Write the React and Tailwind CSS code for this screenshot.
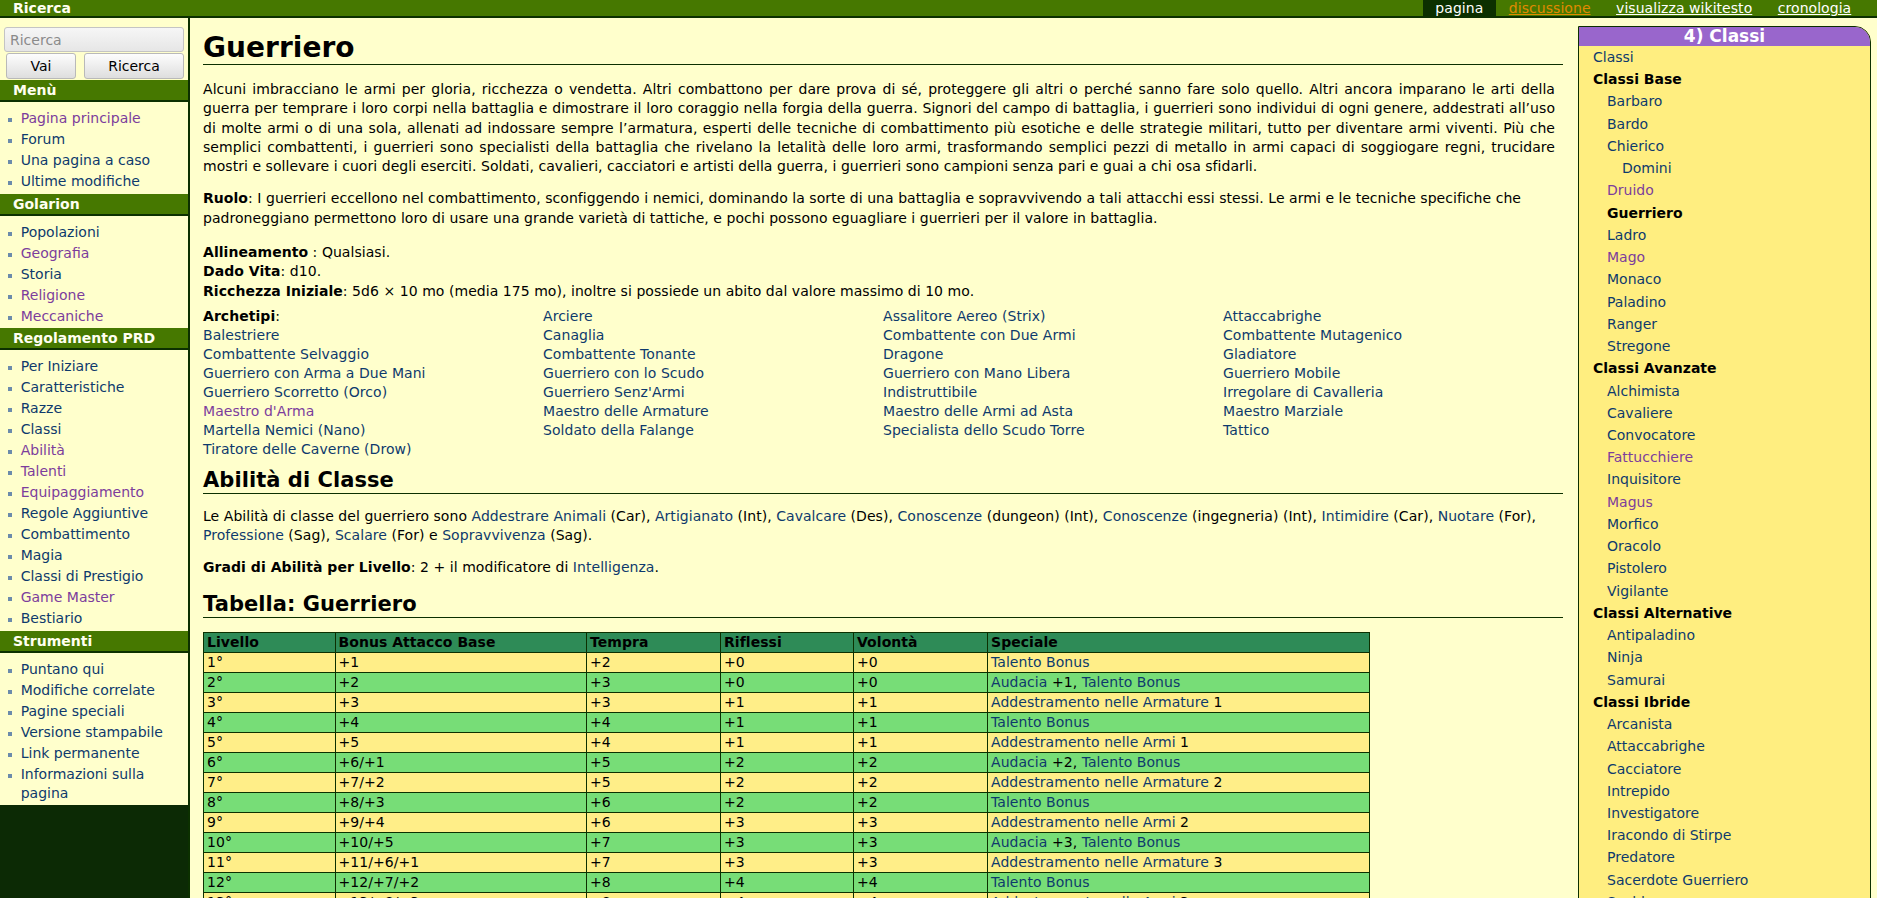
import React from 'react';

// pagina wiki "Guerriero" - layout stile MediaWiki con sidebar e box classi
const LINK = 'text-[#0e3a6c]';
const VISITED = 'text-[#7c3d9c]';

function Wiki({ text }) {
  // [Testo] = link, [*Testo] = link visitato
  return text.split(/(\[[^\]]+\])/).map((part, i) => {
    if (part.startsWith('[')) {
      const inner = part.slice(1, -1);
      const visited = inner.startsWith('*');
      return (
        <a key={i} href="#" className={visited ? VISITED : LINK}>
          {visited ? inner.slice(1) : inner}
        </a>
      );
    }
    return <span key={i}>{part}</span>;
  });
}

const sidebar = [
  { title: 'Menù', items: ['*Pagina principale', 'Forum', 'Una pagina a caso', 'Ultime modifiche'] },
  { title: 'Golarion', items: ['Popolazioni', '*Geografia', 'Storia', '*Religione', '*Meccaniche'] },
  {
    title: 'Regolamento PRD',
    items: [
      'Per Iniziare', 'Caratteristiche', 'Razze', 'Classi', '*Abilità', '*Talenti', '*Equipaggiamento',
      'Regole Aggiuntive', 'Combattimento', 'Magia', 'Classi di Prestigio', '*Game Master', 'Bestiario'
    ]
  },
  {
    title: 'Strumenti',
    items: ['Puntano qui', 'Modifiche correlate', 'Pagine speciali', 'Versione stampabile', 'Link permanente', 'Informazioni sulla pagina']
  }
];

const tabs = [
  { label: 'pagina', active: true },
  { label: 'discussione', missing: true },
  { label: 'visualizza wikitesto' },
  { label: 'cronologia' }
];

// [testo, livello, tipo]
const classi = [
  ['Classi', 0], ['Classi Base', 0, 'b'],
  ['Barbaro', 1], ['Bardo', 1], ['Chierico', 1], ['Domini', 2], ['Druido', 1, 'v'], ['Guerriero', 1, 'b'],
  ['Ladro', 1], ['Mago', 1, 'v'], ['Monaco', 1], ['Paladino', 1], ['Ranger', 1], ['Stregone', 1],
  ['Classi Avanzate', 0, 'b'],
  ['Alchimista', 1], ['Cavaliere', 1], ['Convocatore', 1], ['Fattucchiere', 1, 'v'], ['Inquisitore', 1],
  ['Magus', 1, 'v'], ['Morfico', 1], ['Oracolo', 1], ['Pistolero', 1], ['Vigilante', 1],
  ['Classi Alternative', 0, 'b'],
  ['Antipaladino', 1], ['Ninja', 1], ['Samurai', 1],
  ['Classi Ibride', 0, 'b'],
  ['Arcanista', 1], ['Attaccabrighe', 1], ['Cacciatore', 1], ['Intrepido', 1], ['Investigatore', 1],
  ['Iracondo di Stirpe', 1], ['Predatore', 1], ['Sacerdote Guerriero', 1], ['Scaldo', 1],
  ['Schermagliatore', 1], ['Sciamano', 1], ['Spadaccino', 1]
];

const archetipi = [
  null, 'Arciere', 'Assalitore Aereo (Strix)', 'Attaccabrighe',
  'Balestriere', 'Canaglia', 'Combattente con Due Armi', 'Combattente Mutagenico',
  'Combattente Selvaggio', 'Combattente Tonante', 'Dragone', 'Gladiatore',
  'Guerriero con Arma a Due Mani', 'Guerriero con lo Scudo', 'Guerriero con Mano Libera', 'Guerriero Mobile',
  'Guerriero Scorretto (Orco)', "Guerriero Senz'Armi", 'Indistruttibile', 'Irregolare di Cavalleria',
  "*Maestro d'Arma", 'Maestro delle Armature', 'Maestro delle Armi ad Asta', 'Maestro Marziale',
  'Martella Nemici (Nano)', 'Soldato della Falange', 'Specialista dello Scudo Torre', 'Tattico',
  'Tiratore delle Caverne (Drow)'
];

const livelli = [
  ['1°', '+1', '+2', '+0', '+0', '[Talento Bonus]'],
  ['2°', '+2', '+3', '+0', '+0', '[Audacia] +1, [Talento Bonus]'],
  ['3°', '+3', '+3', '+1', '+1', '[Addestramento nelle Armature] 1'],
  ['4°', '+4', '+4', '+1', '+1', '[Talento Bonus]'],
  ['5°', '+5', '+4', '+1', '+1', '[Addestramento nelle Armi] 1'],
  ['6°', '+6/+1', '+5', '+2', '+2', '[Audacia] +2, [Talento Bonus]'],
  ['7°', '+7/+2', '+5', '+2', '+2', '[Addestramento nelle Armature] 2'],
  ['8°', '+8/+3', '+6', '+2', '+2', '[Talento Bonus]'],
  ['9°', '+9/+4', '+6', '+3', '+3', '[Addestramento nelle Armi] 2'],
  ['10°', '+10/+5', '+7', '+3', '+3', '[Audacia] +3, [Talento Bonus]'],
  ['11°', '+11/+6/+1', '+7', '+3', '+3', '[Addestramento nelle Armature] 3'],
  ['12°', '+12/+7/+2', '+8', '+4', '+4', '[Talento Bonus]'],
  ['13°', '+13/+8/+3', '+8', '+4', '+4', '[Addestramento nelle Armi] 3'],
  ['14°', '+14/+9/+4', '+9', '+4', '+4', '[Audacia] +4, [Talento Bonus]'],
  ['15°', '+15/+10/+5', '+9', '+5', '+5', '[Addestramento nelle Armature] 4'],
  ['16°', '+16/+11/+6/+1', '+10', '+5', '+5', '[Talento Bonus]']
];

function SidebarLink({ label }) {
  const visited = label.startsWith('*');
  return (
    <li className="flex mt-[2px] leading-[19px]">
      <span className="mt-[9px] ml-[8px] mr-[8.7px] h-[4px] w-[4px] shrink-0 bg-[#6b8bab]"></span>
      <a href="#" className={visited ? VISITED : LINK}>{visited ? label.slice(1) : label}</a>
    </li>
  );
}

function Sidebar() {
  return (
    <div className="w-[188px] shrink-0 self-start bg-[#ffffcc]">
      {/* ricerca */}
      <div className="pt-[9px] pb-[1px] pl-[4px] pr-[4px]">
        <input
          placeholder="Ricerca"
          className="block h-[25px] w-[180px] rounded-[3px] border border-[#c4c4c4] bg-gradient-to-b from-[#f6f6f6] to-[#e6e6e6] px-[5px] text-[14px] text-black placeholder:text-[#8a8a8a] outline-none"
        />
        <div className="mt-[1px] flex">
          <button className="ml-[2px] h-[26px] w-[70px] rounded-[3px] border border-[#b9b9b9] bg-gradient-to-b from-[#fdfdfd] to-[#dedede] text-[14px] text-black">
            Vai
          </button>
          <button className="ml-[8px] h-[26px] w-[100px] rounded-[3px] border border-[#b9b9b9] bg-gradient-to-b from-[#fdfdfd] to-[#dedede] text-[14px] text-black">
            Ricerca
          </button>
        </div>
      </div>

      {sidebar.map((section) => (
        <div key={section.title}>
          <div className="h-[22px] border-b-2 border-[#0c3000] bg-[#467800] pl-[13px] text-[14px] font-bold leading-[20px] text-[#fffff0]">
            {section.title}
          </div>
          <ul className="pt-[5px] pb-[2.5px] pr-[6px]">
            {section.items.map((item) => (
              <SidebarLink key={item} label={item} />
            ))}
          </ul>
        </div>
      ))}
    </div>
  );
}

function ClassiBox() {
  return (
    <div className="ml-[15px] w-[293px] shrink-0 self-start overflow-hidden rounded-tr-[16px] border border-[#0c3000] bg-[#ffee80]">
      <div className="bg-[#9966cc] text-center text-[17px] font-bold leading-[19px] text-white">4) Classi</div>
      <ul className="pl-[14px] pb-[6px]">
        {classi.map(([label, level, kind]) => (
          <li
            key={label}
            className={`leading-[22.24px] ${level === 1 ? 'pl-[14px]' : level === 2 ? 'pl-[29px]' : ''}`}
          >
            {kind === 'b' ? (
              <span className="font-bold text-black">{label}</span>
            ) : (
              <a href="#" className={kind === 'v' ? VISITED : LINK}>{label}</a>
            )}
          </li>
        ))}
      </ul>
    </div>
  );
}

function Content() {
  return (
    <div className="flex min-h-[880px] flex-1 border-l-2 border-[#0c3000] bg-[#ffffcc] pt-[8px] pl-[13px] pr-[6px]">
      <div className="min-w-0 flex-1 tracking-[0.05px] text-black">
        <h1 className="mt-[6px] mb-[15px] border-b border-[#0c3000] text-[28px] font-bold leading-[32px]">Guerriero</h1>

        <p className="mb-[13px] pr-[8px] text-justify leading-[19.25px]">
          Alcuni imbracciano le armi per gloria, ricchezza o vendetta. Altri combattono per dare prova di sé, proteggere gli altri o
          perché sanno fare solo quello. Altri ancora imparano le arti della guerra per temprare i loro corpi nella battaglia e
          dimostrare il loro coraggio nella forgia della guerra. Signori del campo di battaglia, i guerrieri sono individui di ogni
          genere, addestrati all’uso di molte armi o di una sola, allenati ad indossare sempre l’armatura, esperti delle tecniche di
          combattimento più esotiche e delle strategie militari, tutto per diventare armi viventi. Più che semplici combattenti, i
          guerrieri sono specialisti della battaglia che rivelano la letalità delle loro armi, trasformando semplici pezzi di metallo
          in armi capaci di soggiogare regni, trucidare mostri e sollevare i cuori degli eserciti. Soldati, cavalieri, cacciatori e
          artisti della guerra, i guerrieri sono campioni senza pari e guai a chi osa sfidarli.
        </p>

        <p className="mb-[15px] leading-[19.25px]">
          <b>Ruolo</b>: I guerrieri eccellono nel combattimento, sconfiggendo i nemici, dominando la sorte di una battaglia e
          sopravvivendo a tali attacchi essi stessi. Le armi e le tecniche specifiche che padroneggiano permettono loro di usare una
          grande varietà di tattiche, e pochi possono eguagliare i guerrieri per il valore in battaglia.
        </p>

        <p className="mb-[5px] leading-[19.6px]">
          <b>Allineamento</b> : Qualsiasi.
          <br />
          <b>Dado Vita</b>: d10.
          <br />
          <b>Ricchezza Iniziale</b>: 5d6 × 10 mo (media 175 mo), inoltre si possiede un abito dal valore massimo di 10 mo.
        </p>

        {/* archetipi */}
        <div className="mb-[9px] grid grid-cols-4 leading-[19px]">
          {archetipi.map((a, i) =>
            a === null ? (
              <div key={i}>
                <b>Archetipi</b>:
              </div>
            ) : (
              <div key={i}>
                <Wiki text={`[${a}]`} />
              </div>
            )
          )}
        </div>

        <h2 className="mb-[13px] border-b border-[#0c3000] text-[21px] font-bold leading-[25px]">Abilità di Classe</h2>

        <p className="mb-[13px] leading-[19.25px]">
          <Wiki text="Le Abilità di classe del guerriero sono [Addestrare Animali] (Car), [Artigianato] (Int), [Cavalcare] (Des), [Conoscenze] (dungeon) (Int), [Conoscenze] (ingegneria) (Int), [Intimidire] (Car), [Nuotare] (For), [Professione] (Sag), [Scalare] (For) e [Sopravvivenza] (Sag)." />
        </p>

        <p className="mb-[15px] leading-[19.25px]">
          <b>Gradi di Abilità per Livello</b>: <Wiki text="2 + il modificatore di [Intelligenza]." />
        </p>

        <h2 className="mb-[14px] border-b border-[#0c3000] text-[21px] font-bold leading-[25px]">Tabella: Guerriero</h2>

        <table className="w-[1167px] table-fixed border-collapse border border-[#0c3000] leading-[19px]">
          <colgroup>
            <col className="w-[131.5px]" />
            <col className="w-[251.5px]" />
            <col className="w-[134px]" />
            <col className="w-[133px]" />
            <col className="w-[134px]" />
            <col />
          </colgroup>
          <thead>
            <tr className="bg-[#2e8b57] text-left">
              {['Livello', 'Bonus Attacco Base', 'Tempra', 'Riflessi', 'Volontà', 'Speciale'].map((h) => (
                <th key={h} className="border border-[#0c3000] pl-[3px] font-bold">{h}</th>
              ))}
            </tr>
          </thead>
          <tbody>
            {livelli.map((row, i) => (
              <tr key={row[0]} className={i % 2 === 0 ? 'bg-[#ffee88]' : 'bg-[#77dd77]'}>
                {row.slice(0, 5).map((cell, j) => (
                  <td key={j} className="border border-[#0c3000] pl-[3px]">{cell}</td>
                ))}
                <td className="border border-[#0c3000] pl-[3px]">
                  <Wiki text={row[5]} />
                </td>
              </tr>
            ))}
          </tbody>
        </table>
      </div>

      <ClassiBox />
    </div>
  );
}

export default function App() {
  return (
    <div className="min-h-screen bg-[#0c2a05] font-['DejaVu_Sans','Liberation_Sans',sans-serif] text-[14px]">
      {/* barra superiore */}
      <div className="flex h-[18px] items-start justify-between border-b-2 border-[#0c3000] bg-[#467800]">
        <div className="pl-[13px] text-[14px] font-bold leading-[16px] text-[#fffff0]">Ricerca</div>
        <div className="flex pr-[13px] text-[14px] leading-[16px] tracking-[0.05px]">
          {tabs.map((t) => (
            <a
              key={t.label}
              href="#"
              className={`px-[12.75px] ${
                t.active ? 'bg-[#0c3000] text-white' : t.missing ? 'text-[#e08a00] underline' : 'text-white underline'
              }`}
            >
              {t.label}
            </a>
          ))}
        </div>
      </div>

      <div className="flex">
        <Sidebar />
        <Content />
      </div>
    </div>
  );
}
